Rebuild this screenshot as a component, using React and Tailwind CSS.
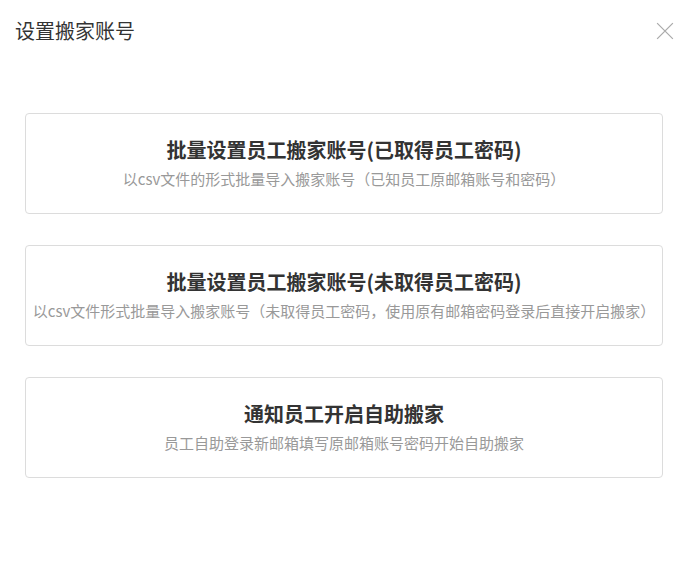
import React from 'react'

const options = [
    {
        title: "批量设置员工搬家账号(已取得员工密码)",
        desc: "以csv文件的形式批量导入搬家账号（已知员工原邮箱账号和密码）",
    },
    {
        title: "批量设置员工搬家账号(未取得员工密码)",
        desc: "以csv文件形式批量导入搬家账号（未取得员工密码，使用原有邮箱密码登录后直接开启搬家）",
    },
    {
        title: "通知员工开启自助搬家",
        desc: "员工自助登录新邮箱填写原邮箱账号密码开始自助搬家",
    },
]

const App = () => {
    return (
        <div className="w-[688px] h-[567px] bg-white font-['Noto_Sans_CJK_SC',sans-serif]">
            {/* header */}
            <div className="flex items-center justify-between pl-[15px] pr-[14px] pt-[17px] h-[45px]">
                <span className="text-[20px] leading-[26px] text-[#333]">设置搬家账号</span>
                <button type="button" className="w-[18px] h-[18px] text-[#aaa]">
                    <svg viewBox="0 0 16 16" className="w-[18px] h-[18px]" fill="none" stroke="currentColor" strokeWidth="1.1">
                        <path d="M1 1 L15 15 M15 1 L1 15"/>
                    </svg>
                </button>
            </div>

            {/* options */}
            <div className="flex flex-col gap-[31px] pl-[25px] pr-[25px] pt-[68px]">
                {options.map((o) => (
                    <div key={o.title} className="h-[101px] border border-[#dcdcdc] rounded-[4px] flex flex-col items-center justify-center">
                        <div className="text-[20px] leading-[26px] font-bold text-[#333] mt-[-2px]">{o.title}</div>
                        <div className="text-[15px] leading-[20px] text-[#999] mt-[6px] whitespace-nowrap">{o.desc}</div>
                    </div>
                ))}
            </div>
        </div>
    )
}

export default App
